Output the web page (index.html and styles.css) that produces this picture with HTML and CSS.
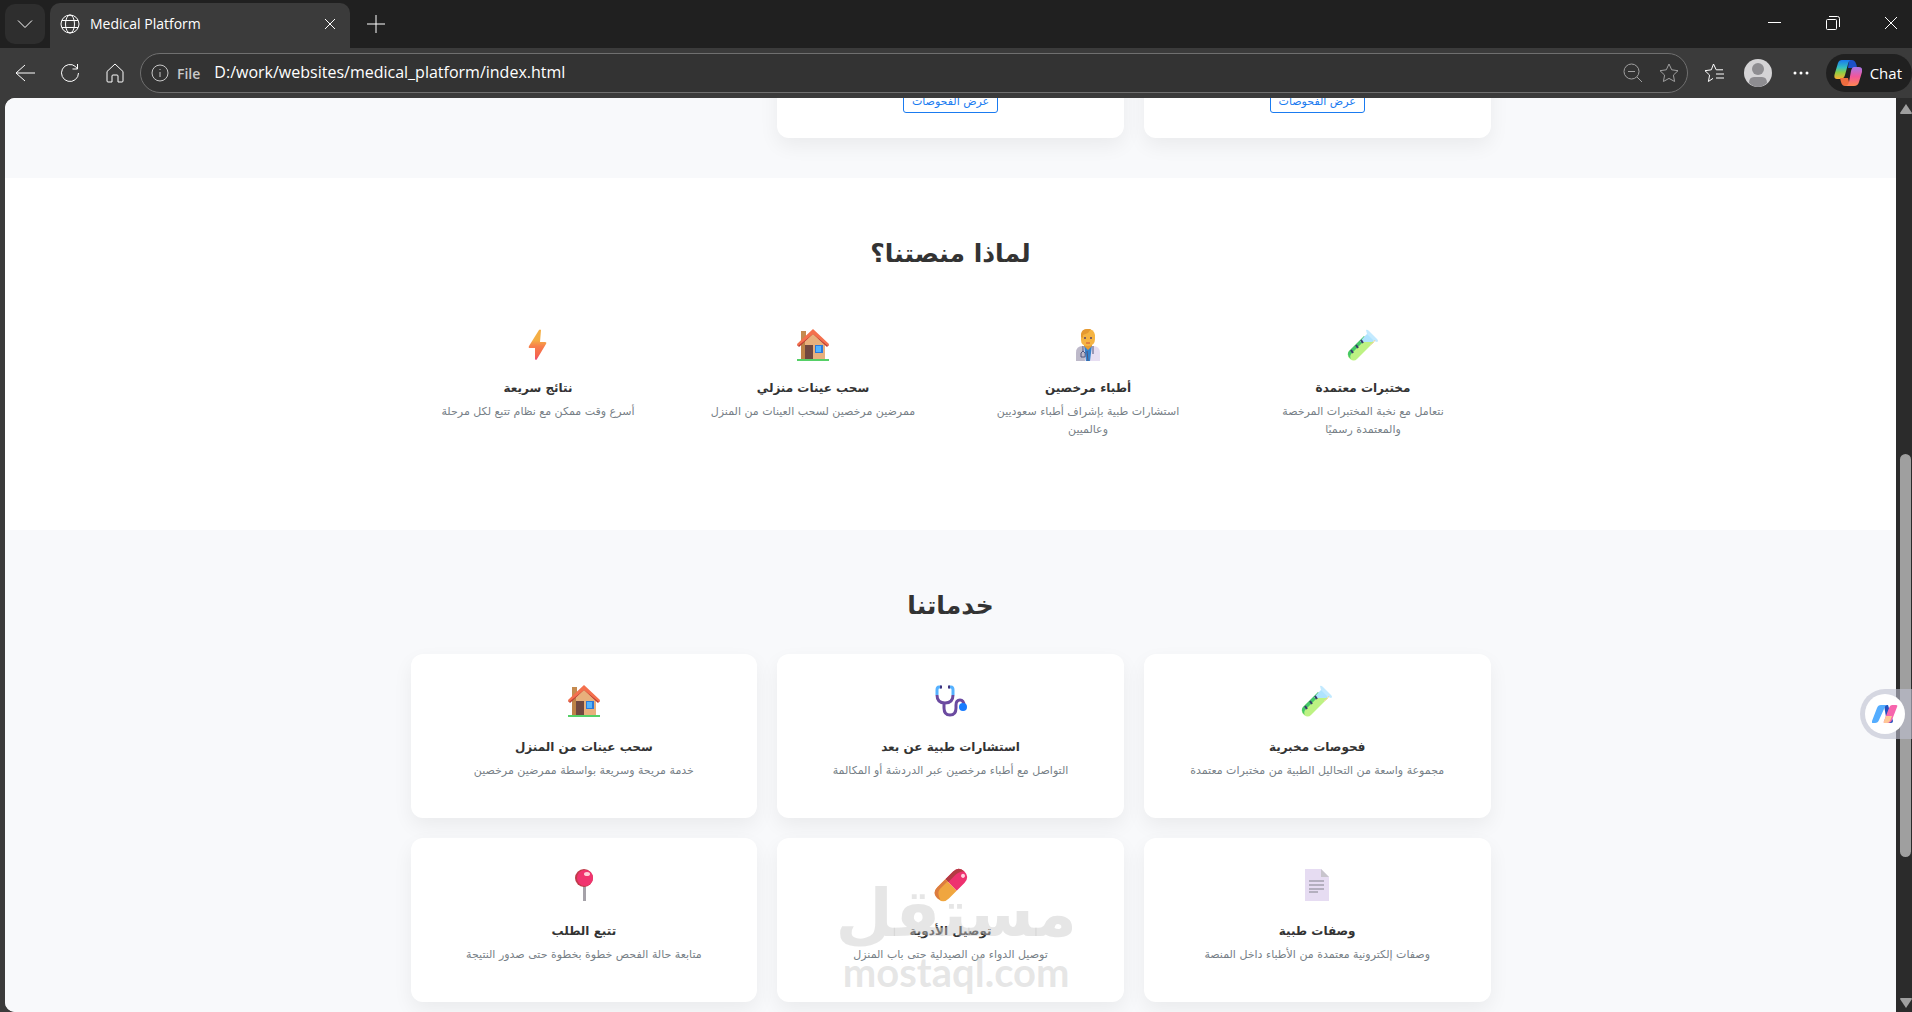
FILE: index.html
```html
<!DOCTYPE html>
<html lang="ar">
<head>
    <meta charset="UTF-8">
    <meta name="viewport" content="width=device-width, initial-scale=1.0">
    <title>Medical Platform</title>
    <link rel="stylesheet" href="styles.css">
</head>
<body>
    <!-- shared icons -->
    <svg class="sprite" aria-hidden="true">
        <symbol id="tube" viewBox="0 0 32 32">
            <path d="M18 7 L27 13 L10 30 Q7 33 3 30 Q-1 26 2 22 Z" fill="#bdf283"/>
            <path d="M17 7 L19 10 L5 24 Q2 27 4 30 Q-1 26 2 22 Z" fill="#44c767"/>
            <path d="M16 9 L21 4 L28 11 L25 13 H13 Z" fill="#aee3ff"/>
            <path d="M19 1 Q20 0 22 2 L30 10 Q32 12 30 13 L27 12 L20 5 Z" fill="#c3eaff"/>
            <path d="M4 21 l2 3 M9 16 l2 3 M14 11 l2 3" stroke="#37396b" stroke-width="2" fill="none"/>
            <path d="M28 11 L26 14 L23 16" stroke="#f4d6a4" fill="none"/>
        </symbol>
        <symbol id="house" viewBox="0 0 32 32">
            <path d="M4 2 H9 V12 H4 Z" fill="#c58b50"/>
            <path d="M4 14 L16 4 L28 14 V30 H4 Z" fill="#e8b07c"/>
            <path d="M4 15 L8 12 V30 H4 Z" fill="#bd8247"/>
            <path d="M1 17 L16 3 L31 17" stroke="#b93a35" stroke-width="3" fill="none"/>
            <path d="M0 15 L16 0 L32 15 L31 17 L16 5 L1 17 Z" fill="#f4704d"/>
            <rect x="8" y="16" width="8" height="14" fill="#714840"/>
            <rect x="18" y="16" width="8" height="8" fill="#2c79d8"/>
            <rect x="19" y="17" width="5" height="6" fill="#52b4ff"/>
            <rect y="30" width="32" height="2" fill="#55d067"/>
        </symbol>
    </svg>

    <header class="browser">
        <div class="tab-strip">
            <button class="tab-menu" aria-label="Tab actions">
                <svg width="16" height="16" viewBox="0 0 16 16"><path d="M1 4.500l7 7 7-7"/></svg>
            </button>
            <div class="tab">
                <svg width="20" height="20" viewBox="0 0 20 20"><circle cx="10" cy="10" r="9"/><ellipse cx="10" cy="10" rx="4.500" ry="9"/><path d="M2 6.500h16M2 13.500h16"/></svg>
                <span class="tab-title">Medical Platform</span>
                <button aria-label="Close tab"><svg width="12" height="12" viewBox="0 0 12 12"><path d="M1 1l10 10M11 1L1 11"/></svg></button>
            </div>
            <button class="new-tab" aria-label="New tab"><svg width="20" height="20" viewBox="0 0 20 20"><path d="M10 1v18M1 10h18"/></svg></button>
            <div class="window-buttons">
                <button aria-label="Minimize"><svg width="14" height="14" viewBox="0 0 14 14"><path d="M0 6.500h13"/></svg></button>
                <button aria-label="Restore"><svg width="14" height="14" viewBox="0 0 14 14"><rect x=".5" y="3.500" width="10" height="10" rx="1"/><path d="M3 .5h8.500a2 2 0 0 1 2 2V11"/></svg></button>
                <button aria-label="Close"><svg width="14" height="14" viewBox="0 0 14 14"><path d="M1 1l12 12M13 1L1 13"/></svg></button>
            </div>
        </div>
        <div class="toolbar">
            <nav class="nav-buttons">
                <button aria-label="Back"><svg width="20" height="20" viewBox="0 0 20 20"><path d="M20 10H1M10 2l-9 8 9 8"/></svg></button>
                <button aria-label="Refresh"><svg width="20" height="20" viewBox="0 0 20 20"><path d="M18.500 10a8.500 8.500 0 1 1-3-6.500L17.500 6M17.500 1v5h-5"/></svg></button>
                <button aria-label="Home"><svg width="20" height="20" viewBox="0 0 20 20"><path d="M2 8.500L10 1l8 7.500V18q0 1-1 1h-4v-6q0-1-1-1H8q-1 0-1 1v6H3q-1 0-1-1z"/></svg></button>
            </nav>
            <div class="address-bar">
                <svg width="18" height="18" viewBox="0 0 18 18"><circle cx="9" cy="9" r="8"/><path d="M9 8v5M9 5v1"/></svg>
                <label for="url">File</label>
                <input type="text" id="url" value="D:/work/websites/medical_platform/index.html">
                <button aria-label="Zoom"><svg width="20" height="20" viewBox="0 0 20 20"><circle cx="8.500" cy="8.500" r="7.500"/><path d="M14 14l5 5M5 8.500h7"/></svg></button>
                <button aria-label="Add to favorites"><svg width="20" height="20" viewBox="0 0 20 20"><path d="M10 1l2.700 5.800 6.300.9-4.600 4.400 1.200 6.400L10 15.400l-5.600 3.100 1.200-6.400L1 7.700l6.300-.9z"/></svg></button>
            </div>
            <div class="tool-buttons">
                <button aria-label="Favorites"><svg width="20" height="20" viewBox="0 0 20 20"><path d="M9 15.400l-4.600 3.100 1.200-6.400L1 7.700l6.300-.9L9.500 1l2.700 5.800H19M12 11h8M12 15h8"/></svg></button>
                <button aria-label="Profile"><svg class="avatar" width="28" height="28" viewBox="0 0 28 28"><circle cx="14" cy="14" r="14" fill="#d4d3d5"/><circle cx="14" cy="10" r="6" fill="#8e8d91"/><path d="M5 24q0-6 5-6h8q5 0 5 6-9 8-18 0" fill="#8e8d91"/></svg></button>
                <button aria-label="Settings and more"><svg class="dots" width="18" height="18" viewBox="0 0 18 18"><circle cx="3" cy="9" r="1.500"/><circle cx="9" cy="9" r="1.500"/><circle cx="15" cy="9" r="1.500"/></svg></button>
            </div>
            <button class="chat">
                <svg width="28" height="28" viewBox="0 0 28 28">
                    <defs>
                        <linearGradient id="warm" x2="0" y2="1"><stop offset="0" stop-color="#1878ef"/><stop offset=".4" stop-color="#35bfc0"/><stop offset=".65" stop-color="#8dce44"/><stop offset="1" stop-color="#ffae33"/></linearGradient>
                        <linearGradient id="pink" x2="0" y2="1"><stop offset="0" stop-color="#a577e8"/><stop offset=".5" stop-color="#f2569b"/><stop offset="1" stop-color="#ff8750"/></linearGradient>
                    </defs>
                    <path d="M15 1h3q4 0 5 8h-9z" fill="#1c51c8"/>
                    <path d="M8 1h9q-2 0-3 4l-3 11q-1 4-5 4H3q-4 0-2-6L4 4q1-3 4-3z" fill="url(#warm)"/>
                    <path d="M6 19h8l2 8h-5q-3 0-4-4z" fill="#ee6c3e"/>
                    <path d="M20 8h5q4 0 3 5l-3 10q-1 4-5 4h-9q3 0 4-4l2-11q1-4 3-4z" fill="url(#pink)"/>
                </svg>
                Chat
            </button>
        </div>
    </header>

    <div class="viewport">
        <main class="page" dir="rtl">
            <section class="labs">
                <div class="container card-grid">
                    <div class="card lab"><button>عرض الفحوصات</button></div>
                    <div class="card lab"><button>عرض الفحوصات</button></div>
                </div>
            </section>

            <section class="why">
                <div class="container">
                    <h2>لماذا منصتنا؟</h2>
                    <div class="feature-grid">
                        <div class="feature">
                            <svg class="icon"><use href="#tube"/></svg>
                            <h3>مختبرات معتمدة</h3>
                            <p>نتعامل مع نخبة المختبرات المرخصة والمعتمدة رسميًا</p>
                        </div>
                        <div class="feature">
                            <svg class="icon" viewBox="0 0 32 32">
                                <path d="M4 32V24q0-7 7-7h10q7 0 7 7v8z" fill="#e7def2"/>
                                <path d="M4 32V24q0-7 7-7l2 15z" fill="#bdb9c9"/>
                                <path d="M12 16h8l-2 16h-4z" fill="#3481cc"/>
                                <path d="M12 13h8v4l-4 4-4-4z" fill="#e69b32"/>
                                <path d="M9 6q1-6 7-6t7 6v4q0 7-7 7t-7-6z" fill="#f5b443"/>
                                <path d="M9 8V5q1-5 6-5h4l-3 4-5 2v3z" fill="#e59931"/>
                                <circle cx="13" cy="9" r="1" fill="#59456a"/><circle cx="19" cy="9" r="1" fill="#59456a"/>
                                <path d="M14 14h4" stroke="#cc513b" fill="none"/>
                                <path d="M11 17v5q-3 1-2 6h4q1-5-2-6M21 17v8M15 22l1 10" stroke="#50557d" fill="none"/>
                            </svg>
                            <h3>أطباء مرخصين</h3>
                            <p>استشارات طبية بإشراف أطباء سعوديين وعالميين</p>
                        </div>
                        <div class="feature">
                            <svg class="icon"><use href="#house"/></svg>
                            <h3>سحب عينات منزلي</h3>
                            <p>ممرضين مرخصين لسحب العينات من المنزل</p>
                        </div>
                        <div class="feature">
                            <svg class="icon" viewBox="0 0 32 32">
                                <defs><linearGradient id="bolt" x2="0" y2="1"><stop offset=".35" stop-color="#f4ae44"/><stop offset=".55" stop-color="#f7804c"/><stop offset=".85" stop-color="#f5654e"/><stop offset="1" stop-color="#e9477c"/></linearGradient></defs>
                                <path d="M17 1 L7 17 Q6 19 8 19 H13 V30 Q14 32 15 30 L24 15 Q25 13 23 13 H18 L19 1 Q18 0 17 1 Z" fill="url(#bolt)"/>
                            </svg>
                            <h3>نتائج سريعة</h3>
                            <p>أسرع وقت ممكن مع نظام تتبع لكل مرحلة</p>
                        </div>
                    </div>
                </div>
            </section>

            <section class="services">
                <div class="container">
                    <h2>خدماتنا</h2>
                    <div class="card-grid">
                        <div class="card">
                            <svg class="icon"><use href="#tube"/></svg>
                            <h3>فحوصات مخبرية</h3>
                            <p>مجموعة واسعة من التحاليل الطبية من مختبرات معتمدة</p>
                        </div>
                        <div class="card">
                            <svg class="icon" viewBox="0 0 32 32">
                                <g fill="none" stroke-width="3">
                                    <path d="M2 10q0 8 8 8t8-8M9 18v5q0 7 6 7t6-7v-3q0-5 4-5t4 6" stroke="#6b4aa0"/>
                                    <path d="M6 2H4Q2 2 2 5v5M14 2h2q2 0 2 3v5" stroke="#55b1ff"/>
                                    <path d="M5 2h2M13 2h2" stroke="#41347f"/>
                                </g>
                                <circle cx="28" cy="22" r="4" fill="#177bff"/>
                            </svg>
                            <h3>استشارات طبية عن بعد</h3>
                            <p>التواصل مع أطباء مرخصين عبر الدردشة أو المكالمة</p>
                        </div>
                        <div class="card">
                            <svg class="icon"><use href="#house"/></svg>
                            <h3>سحب عينات من المنزل</h3>
                            <p>خدمة مريحة وسريعة بواسطة ممرضين مرخصين</p>
                        </div>
                        <div class="card">
                            <svg class="icon" viewBox="0 0 32 32">
                                <path d="M4 0h16l8 8v24H4z" fill="#e6dcf2"/>
                                <path d="M20 0l8 8h-8z" fill="#c8c5cc"/>
                                <path d="M8 12h15M8 16h15M8 20h15M8 23h9" stroke="#a4a0ae" stroke-width="1.500"/>
                            </svg>
                            <h3>وصفات طبية</h3>
                            <p>وصفات إلكترونية معتمدة من الأطباء داخل المنصة</p>
                        </div>
                        <div class="card">
                            <svg class="icon" viewBox="0 0 32 32">
                                <g transform="rotate(45 16 16)">
                                    <path d="M8 16V5q0-8 8-8t8 8v11z" fill="#ee316f"/>
                                    <path d="M8 16V5q0-8 8-8-4 3-4 9v10z" fill="#b33b43"/>
                                    <path d="M8 16h16v11q0 8-8 8t-8-8z" fill="#f0a63f"/>
                                    <path d="M8 16h3v11q1 5 8 7-4 2-8 0-3-2-3-7z" fill="#dc7c3f"/>
                                    <ellipse cx="18" cy="1" rx="2" ry="2" fill="#ffd2df"/>
                                </g>
                            </svg>
                            <h3>توصيل الأدوية</h3>
                            <p>توصيل الدواء من الصيدلية حتى باب المنزل</p>
                            <div class="watermark">
                                <span class="mark-ar">مستقل</span>
                                <span class="mark-en">mostaql.com</span>
                            </div>
                        </div>
                        <div class="card">
                            <svg class="icon" viewBox="0 0 32 32">
                                <path d="M15 16h3v16h-3z" fill="#a5a2a9"/>
                                <circle cx="16" cy="9" r="9" fill="#c03b49"/>
                                <circle cx="17" cy="9" r="8" fill="#f0346f"/>
                                <ellipse cx="19" cy="5" rx="3" ry="2" fill="#ffd0d9"/>
                            </svg>
                            <h3>تتبع الطلب</h3>
                            <p>متابعة حالة الفحص خطوة بخطوة حتى صدور النتيجة</p>
                        </div>
                    </div>
                </div>
            </section>
        </main>

        <div class="scrollbar">
            <svg width="12" height="10" viewBox="0 0 12 10"><path d="M6 0l6 9q0 1-1 1H1q-1 0-1-1z"/></svg>
            <div class="track"><div class="thumb"></div></div>
            <svg width="12" height="10" viewBox="0 0 12 10"><path d="M6 10l6-9q0-1-1-1H1Q0 0 0 1z"/></svg>
        </div>
    </div>

    <button class="assistant" aria-label="Assistant">
        <span>
            <svg width="26" height="20" viewBox="0 0 26 20">
                <path d="M12 1h4l5 16q0 2-2 2h-4z" fill="#2250bd"/>
                <path d="M9 1h7q-3 0-4 4L7 16q-1 3-4 3H1q-2 0-1-2L5 4q1-3 4-3z" fill="#54adff"/>
                <path d="M20 1h4q2 0 1 2l-5 13q-1 3-4 3h-3q-2 0-1-2l5-13q1-3 3-3z" fill="#f765ad"/>
                <path d="M14 12h6l-2 5q-1 2-3 2h-2q-2 0-1-2z" fill="#ffc795"/>
            </svg>
        </span>
    </button>
</body>
</html>
```

FILE: styles.css
```css
* {
    box-sizing: border-box;
}

body {
    margin: 0;
    height: 100vh;
    display: flex;
    flex-direction: column;
    overflow: hidden;
    background-color: #3b3b3b;
    font-family: "DejaVu Sans", sans-serif;
}

button {
    padding: 0;
    border: none;
    background: none;
    color: inherit;
    font-family: inherit;
    cursor: pointer;
}

svg {
    display: block;
    flex-shrink: 0;
}

.sprite {
    position: absolute;
    width: 0;
    height: 0;
}

/* browser bars */
.browser {
    color: #fff;
    font-family: "Open Sans", sans-serif;
}

.browser svg {
    fill: none;
    stroke: currentColor;
}

.tab-strip {
    display: flex;
    align-items: center;
    height: 48px;
    padding-left: 5px;
    background-color: #202020;
}

.tab-menu {
    display: flex;
    align-items: center;
    justify-content: center;
    width: 40px;
    height: 40px;
    margin-right: 5px;
    border-radius: 10px;
    background-color: #2e2e2e;
}

.tab {
    display: flex;
    align-items: center;
    align-self: flex-end;
    gap: 10px;
    width: 300px;
    height: 45px;
    padding: 0 14px 4px 10px;
    border-radius: 10px 10px 0 0;
    background-color: #3b3b3b;
}

.tab-title {
    flex: 1;
    font-size: 14px;
}

.new-tab {
    margin-left: 16px;
}

.window-buttons {
    display: flex;
    gap: 44px;
    margin-left: auto;
    padding: 0 14px 2px 0;
}

.toolbar {
    display: flex;
    align-items: center;
    height: 50px;
    padding-left: 15px;
}

.nav-buttons {
    display: flex;
    gap: 25px;
    margin-right: 15px;
}

.address-bar {
    flex: 1;
    display: flex;
    align-items: center;
    height: 40px;
    padding: 0 8px 0 10px;
    border: 1px solid #707070;
    border-radius: 20px;
    background-color: #333;
    color: #c8c8c8;
}

.address-bar label {
    margin: 0 14px 0 8px;
    font-size: 14px;
    font-weight: 600;
}

.address-bar input {
    flex: 1;
    height: 32px;
    padding: 0 0 2px;
    border: none;
    outline: none;
    background: none;
    color: #fff;
    font-family: inherit;
    font-size: 16px;
}

.address-bar button {
    margin-left: 16px;
    color: #a0a0a0;
}

.tool-buttons {
    display: flex;
    align-items: center;
    gap: 20px;
    margin: 0 16px;
}

.browser .avatar {
    stroke: none;
}

.browser .dots {
    fill: #fff;
    stroke: none;
}

.chat {
    display: flex;
    align-items: center;
    gap: 8px;
    height: 38px;
    padding: 0 10px 0 8px;
    border-radius: 19px;
    background-color: #202020;
    font-size: 15px;
}

.browser .chat svg {
    stroke: none;
}

/* page */
.viewport {
    flex: 1;
    display: flex;
    min-height: 0;
    padding-left: 5px;
}

.page {
    flex: 1;
    overflow: hidden;
    border-radius: 10px 0 0 10px;
    background-color: #fff;
    color: #333;
    text-align: center;
}

.container {
    width: 100%;
    max-width: 1080px;
    margin: 0 auto;
}

.card-grid {
    display: grid;
    grid-template-columns: repeat(3, 1fr);
    gap: 20px;
}

.card {
    position: relative;
    height: 164px;
    padding: 31px 20px;
    border-radius: 12px;
    background-color: #fff;
    box-shadow: 0 8px 20px rgba(0, 0, 0, 0.06);
}

.labs {
    display: flex;
    align-items: flex-end;
    height: 80px;
    padding-bottom: 40px;
    background-color: #f8f9fb;
}

.lab {
    display: flex;
    align-items: flex-end;
    justify-content: center;
    padding-bottom: 25px;
}

.lab button {
    padding: 6px 8px 2px;
    border: 1px solid #1a7bf0;
    border-radius: 3px;
    color: #1a7bf0;
    font-size: 11px;
    line-height: 16px;
}

.why {
    height: 352px;
    padding-top: 58px;
}

.services {
    padding: 58px 0 40px;
    background-color: #f8f9fb;
}

h2 {
    margin: 0;
    font-size: 25px;
    line-height: 36px;
}

.why h2 {
    margin-bottom: 57px;
}

.services h2 {
    margin-bottom: 30px;
}

.feature-grid {
    display: grid;
    grid-template-columns: repeat(4, 1fr);
    gap: 20px;
}

.feature {
    padding: 0 24px;
}

.icon {
    width: 32px;
    height: 32px;
    margin: 0 auto;
    overflow: visible;
}

h3 {
    margin: 16px 0 4px;
    font-size: 12px;
    line-height: 22px;
}

.card h3 {
    margin-top: 19px;
}

p {
    margin: 0;
    color: #777f87;
    font-size: 11px;
    line-height: 18px;
}

.watermark {
    position: absolute;
    top: 36px;
    left: 64px;
    display: flex;
    flex-direction: column;
    align-items: center;
    width: 230px;
    color: rgba(200, 200, 200, 0.45);
    font-weight: bold;
}

.mark-ar {
    font-size: 66px;
    line-height: 80px;
}

.mark-en {
    font-family: Lato, sans-serif;
    font-size: 40px;
    line-height: 36px;
}

/* scrollbar */
.scrollbar {
    display: flex;
    flex-direction: column;
    align-items: center;
    gap: 6px;
    width: 16px;
    padding: 6px 0 4px 3px;
    background-color: #2b2b2b;
    fill: #9f9f9f;
}

.track {
    flex: 1;
    padding-top: 334px;
}

.thumb {
    width: 11px;
    height: 403px;
    border-radius: 6px;
    background-color: #9f9f9f;
}

.assistant {
    position: absolute;
    top: 689px;
    right: 0;
    width: 52px;
    height: 50px;
    padding: 5px;
    border-radius: 25px 0 0 25px;
    background-color: rgba(190, 192, 208, 0.6);
}

.assistant span {
    display: flex;
    align-items: center;
    justify-content: center;
    width: 40px;
    height: 40px;
    border-radius: 50%;
    background-color: #fff;
}
```
